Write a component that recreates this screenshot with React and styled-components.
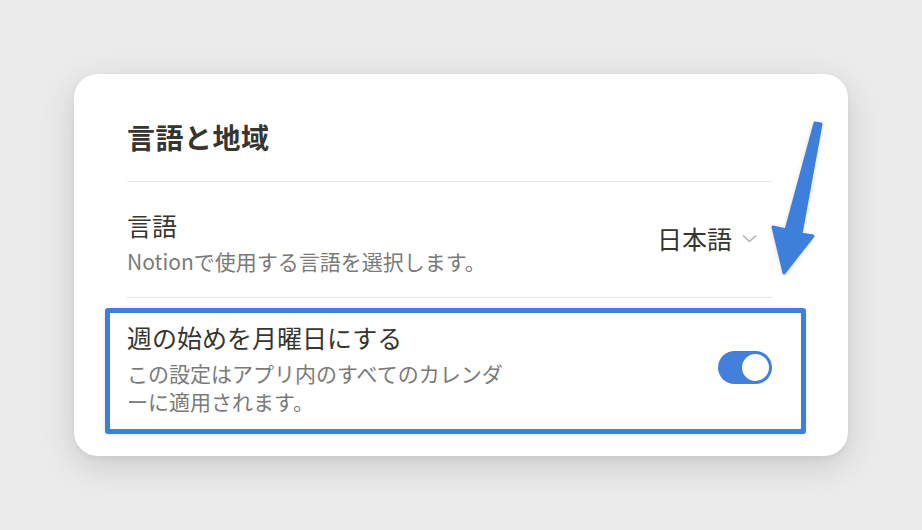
import React, { useState } from "react";
import styled, { createGlobalStyle } from "styled-components";

const GlobalStyle = createGlobalStyle`
  html, body {
    margin: 0;
    padding: 0;
    background: #ebebeb;
    font-family: "Noto Sans CJK JP", "Noto Sans", sans-serif;
    color: #37352f;
  }
`;

const Page = styled.div`
  width: 922px;
  height: 530px;
  padding: 74px 0 0 74px;
  box-sizing: border-box;
`;

const Card = styled.div`
  position: relative;
  width: 774px;
  box-sizing: border-box;
  padding: 43px 76px 14px 53px;
  background: #fff;
  border-radius: 24px;
  box-shadow: 0 10px 34px rgba(0, 0, 0, 0.14), 0 2px 6px rgba(0, 0, 0, 0.05);
`;

const Heading = styled.div`
  font-size: 28px;
  line-height: 40px;
  font-weight: 600;
  letter-spacing: 0.5px;
  padding-bottom: 24px;
  border-bottom: 1px solid #e9e9e7;
`;

const Row = styled.div`
  position: relative;
  display: flex;
  align-items: center;
  justify-content: space-between;
  padding: ${(p) => p.$pad};
  border-bottom: ${(p) => (p.$last ? "none" : "1px solid #e3e3e1")};
`;

const Texts = styled.div`
  display: flex;
  flex-direction: column;
`;

const Label = styled.div`
  font-size: 25px;
  line-height: 36px;
  margin-bottom: 4px;
`;

const Desc = styled.div`
  font-size: 21px;
  line-height: 28px;
  color: #7a7a78;
  max-width: 394px;
`;

const Select = styled.div`
  display: flex;
  align-items: center;
  gap: 10px;
  padding-right: 15px;
  font-size: 25px;
  margin-top: -6px;
`;

const Toggle = styled.button`
  position: relative;
  width: 54px;
  height: 33px;
  border: none;
  padding: 0;
  border-radius: 17px;
  background: ${(p) => (p.$on ? "#4280dc" : "#d3d3d1")};
  cursor: pointer;

  &::after {
    content: "";
    position: absolute;
    top: 3px;
    left: ${(p) => (p.$on ? "24px" : "3px")};
    width: 27px;
    height: 27px;
    border-radius: 50%;
    background: #fff;
  }
`;

const Highlight = styled.div`
  position: absolute;
  left: -22px;
  right: -34px;
  top: 10px;
  bottom: 8px;
  border: 5px solid #3f7fdc;
  border-radius: 3px;
  box-shadow: 0 1px 4px rgba(0, 0, 0, 0.12);
  pointer-events: none;
`;

const Arrow = styled.svg`
  position: absolute;
  left: 686px;
  top: 36px;
  width: 70px;
  height: 175px;
  filter: drop-shadow(0 1px 2px rgba(0, 0, 0, 0.15));
`;

const Chevron = () => (
  <svg width="15" height="9" viewBox="0 0 15 9">
    <path d="M1 1.5 L7.5 7.5 L14 1.5" fill="none" stroke="#b4b4b2" strokeWidth="1.6" />
  </svg>
);

export default function App() {
  const [monday, setMonday] = useState(true);

  return (
    <Page>
      <GlobalStyle />
      <Card>
        <Heading>言語と地域</Heading>
        <Row $pad="25px 0 22px">
          <Texts>
            <Label>言語</Label>
            <Desc>Notionで使用する言語を選択します。</Desc>
          </Texts>
          <Select>
            日本語
            <Chevron />
          </Select>
        </Row>
        <Row $pad="21px 0 27px" $last>
          <Texts>
            <Label>週の始めを月曜日にする</Label>
            <Desc>この設定はアプリ内のすべてのカレンダーに適用されます。</Desc>
          </Texts>
          <Toggle $on={monday} onClick={() => setMonday(!monday)} />
          <Highlight />
        </Row>
        <Arrow viewBox="0 0 70 175">
          <polygon
            points="55,13 61,14 41,124 53,126 24,163 13,117 26,120"
            fill="#3f7fdc"
            stroke="#3f7fdc"
            strokeWidth="3"
            strokeLinejoin="round"
          />
        </Arrow>
      </Card>
    </Page>
  );
}
